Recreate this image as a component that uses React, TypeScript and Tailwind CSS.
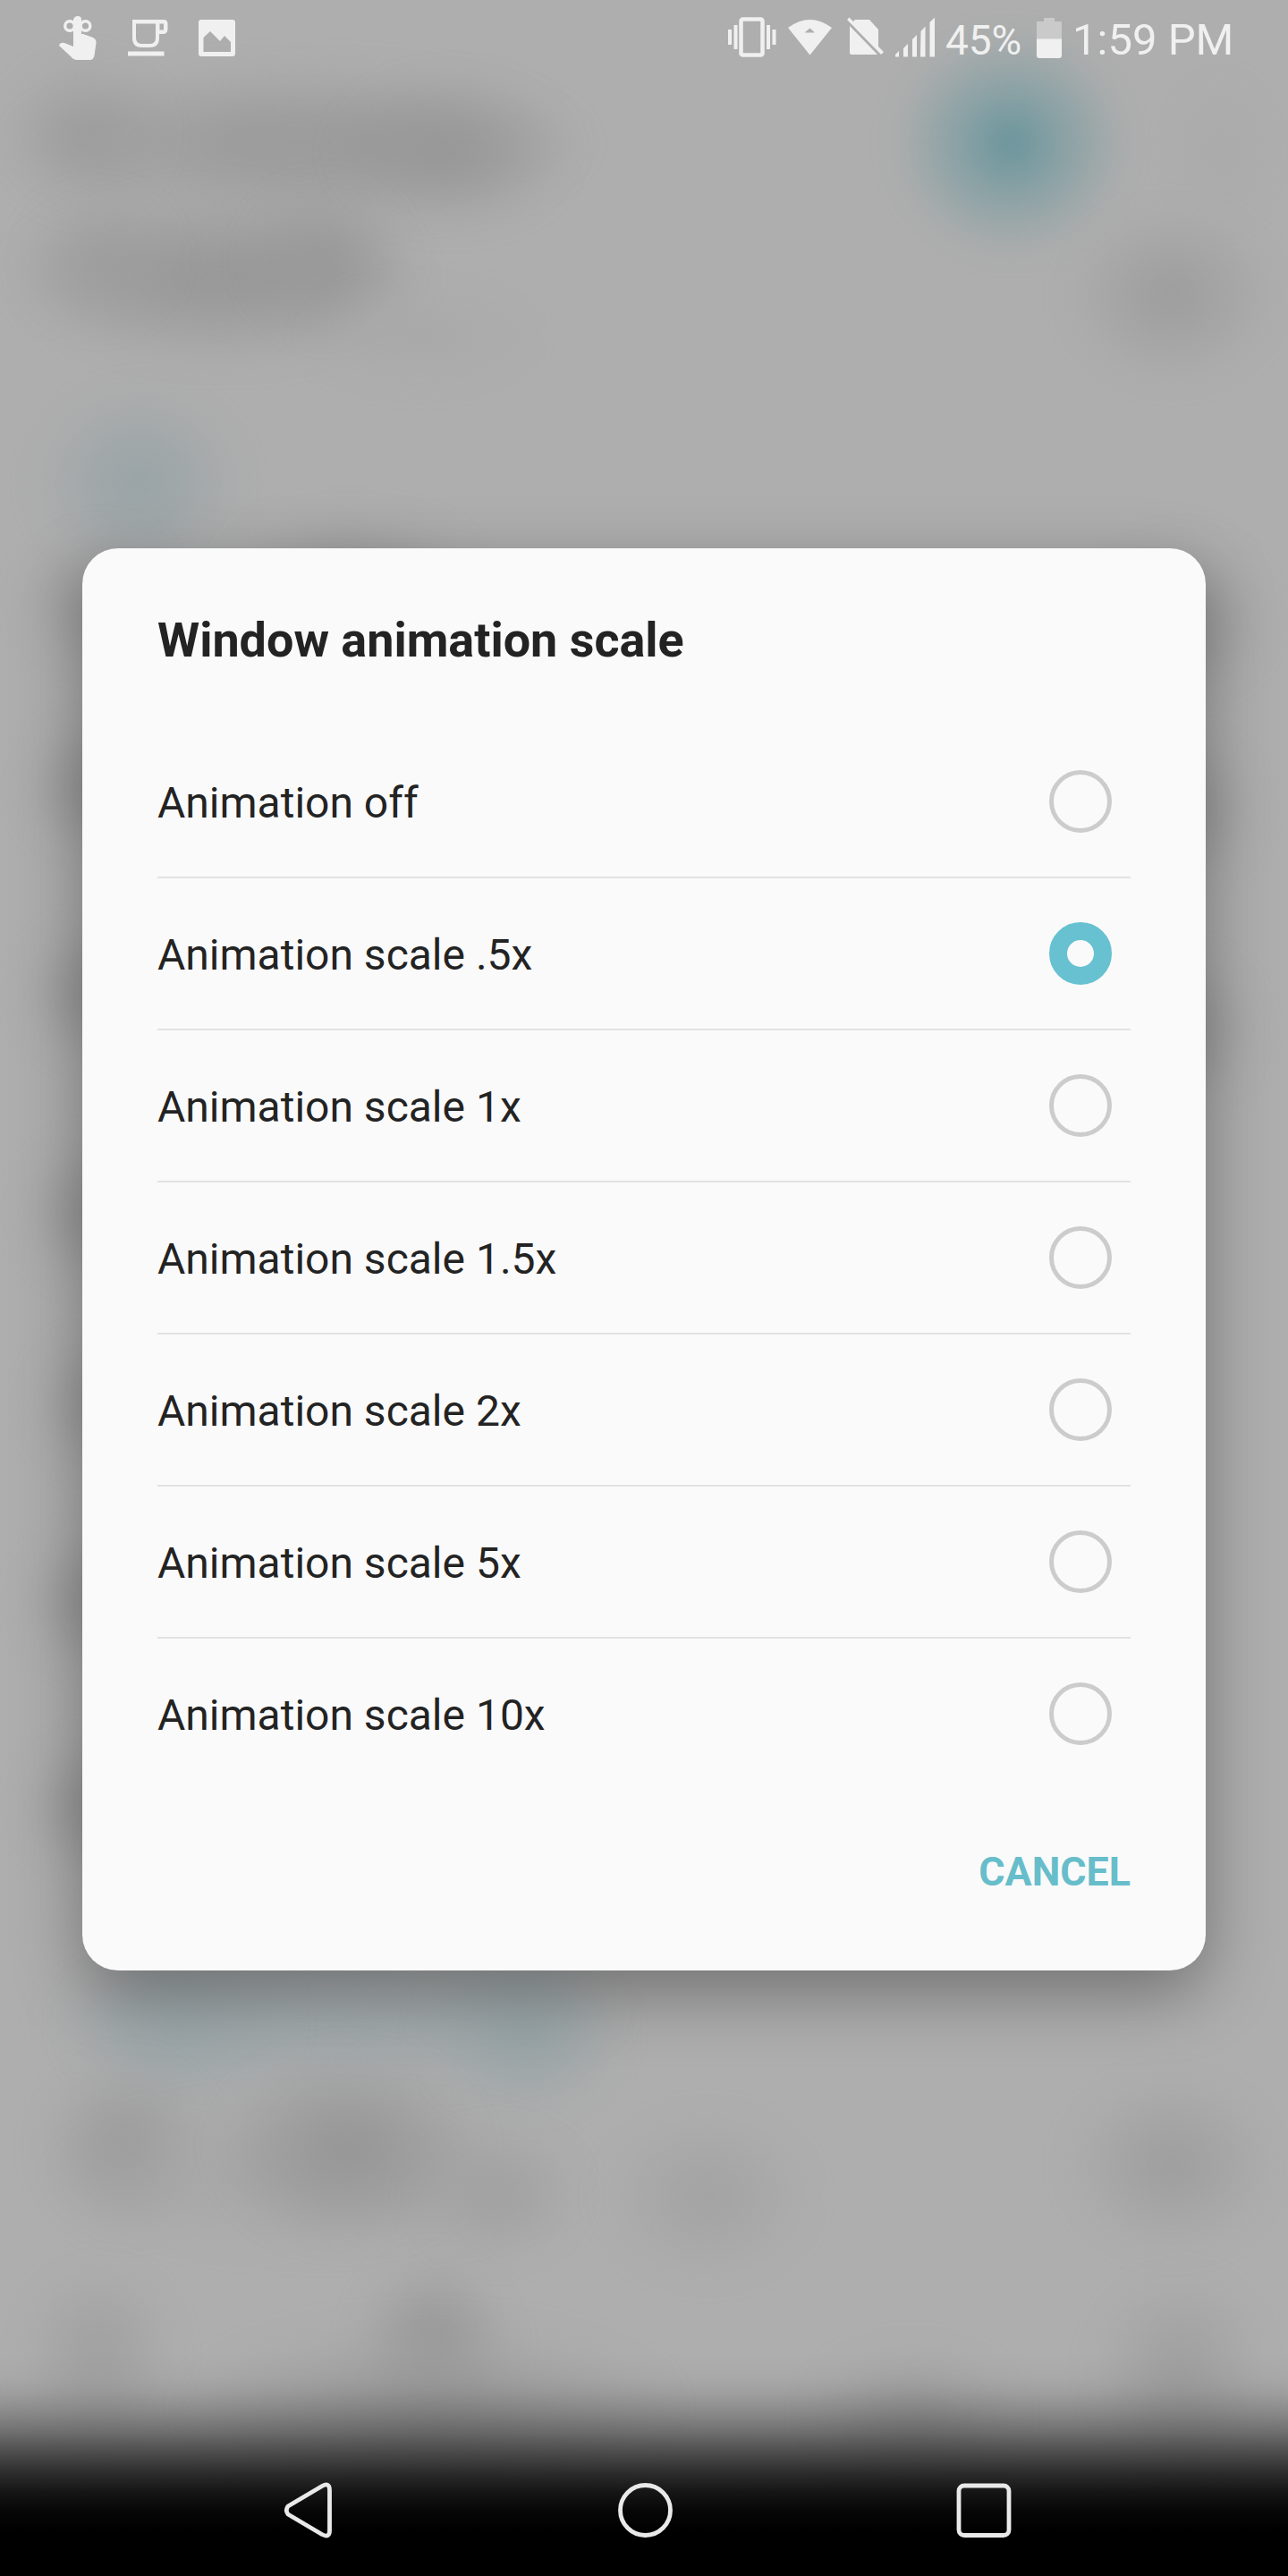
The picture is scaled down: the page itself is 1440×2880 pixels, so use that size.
import React from "react";

const options = [
  "Animation off",
  "Animation scale .5x",
  "Animation scale 1x",
  "Animation scale 1.5x",
  "Animation scale 2x",
  "Animation scale 5x",
  "Animation scale 10x",
];

const smudges = [
  "left-[10px] top-[70px] w-[650px] h-[180px] bg-[radial-gradient(closest-side,#9c9c9c_25%,transparent)]",
  "left-[0px] top-[60px] w-[190px] h-[180px] bg-[radial-gradient(closest-side,#959595a0,transparent)]",
  "left-[370px] top-[80px] w-[270px] h-[180px] bg-[radial-gradient(closest-side,#8f8f8fa0,transparent)]",
  "left-[10px] top-[210px] w-[470px] h-[200px] bg-[radial-gradient(closest-side,#999999_20%,transparent)]",
  "left-[20px] top-[210px] w-[180px] h-[160px] bg-[radial-gradient(closest-side,#98989890,transparent)]",
  "left-[270px] top-[200px] w-[190px] h-[180px] bg-[radial-gradient(closest-side,#929292a0,transparent)]",
  "left-[340px] top-[320px] w-[260px] h-[110px] bg-[radial-gradient(closest-side,#a8a8a8,transparent)]",
  "left-[1000px] top-[35px] w-[260px] h-[250px] bg-[radial-gradient(closest-side,#65939b,#86a0a4_40%,transparent)]",
  "left-[1310px] top-[90px] w-[110px] h-[160px] bg-[radial-gradient(closest-side,#a9a9a9,transparent)]",
  "left-[1190px] top-[230px] w-[240px] h-[200px] bg-[radial-gradient(closest-side,#9c9c9c,transparent)]",
  "left-[35px] top-[430px] w-[240px] h-[220px] bg-[radial-gradient(closest-side,#97a3a6,transparent)]",
  "left-[250px] top-[570px] w-[280px] h-[120px] bg-[radial-gradient(closest-side,#9e9e9e,transparent)]",
  "left-[20px] top-[590px] w-[180px] h-[160px] bg-[radial-gradient(closest-side,#9b9b9b,transparent)]",
  "left-[20px] top-[800px] w-[180px] h-[160px] bg-[radial-gradient(closest-side,#969696,transparent)]",
  "left-[20px] top-[1030px] w-[180px] h-[160px] bg-[radial-gradient(closest-side,#969696,transparent)]",
  "left-[20px] top-[1270px] w-[180px] h-[170px] bg-[radial-gradient(closest-side,#969696,transparent)]",
  "left-[30px] top-[1490px] w-[170px] h-[160px] bg-[radial-gradient(closest-side,#9a9a9a,transparent)]",
  "left-[20px] top-[1710px] w-[180px] h-[160px] bg-[radial-gradient(closest-side,#969696,transparent)]",
  "left-[20px] top-[1940px] w-[180px] h-[160px] bg-[radial-gradient(closest-side,#969696,transparent)]",
  "left-[1220px] top-[600px] w-[200px] h-[180px] bg-[radial-gradient(closest-side,#9b9b9b,transparent)]",
  "left-[1220px] top-[820px] w-[190px] h-[170px] bg-[radial-gradient(closest-side,#999999,transparent)]",
  "left-[1220px] top-[1060px] w-[190px] h-[180px] bg-[radial-gradient(closest-side,#999999,transparent)]",
  "left-[40px] top-[2170px] w-[660px] h-[170px] bg-[radial-gradient(closest-side,#a2a9ab_30%,transparent)]",
  "left-[70px] top-[2170px] w-[260px] h-[190px] bg-[radial-gradient(closest-side,#99a5a8,transparent)]",
  "left-[470px] top-[2170px] w-[230px] h-[200px] bg-[radial-gradient(closest-side,#95a3a6,transparent)]",
  "left-[40px] top-[2300px] w-[200px] h-[200px] bg-[radial-gradient(closest-side,#9a9a9a,transparent)]",
  "left-[60px] top-[2340px] w-[600px] h-[180px] bg-[radial-gradient(closest-side,#a5a5a5,transparent)]",
  "left-[240px] top-[2290px] w-[300px] h-[220px] bg-[radial-gradient(closest-side,#959595,transparent)]",
  "left-[460px] top-[2380px] w-[190px] h-[150px] bg-[radial-gradient(closest-side,#a0a0a0,transparent)]",
  "left-[670px] top-[2360px] w-[240px] h-[190px] bg-[radial-gradient(closest-side,#a2a2a2,transparent)]",
  "left-[1190px] top-[2320px] w-[240px] h-[200px] bg-[radial-gradient(closest-side,#9d9d9d,transparent)]",
  "left-[395px] top-[2520px] w-[180px] h-[200px] bg-[radial-gradient(closest-side,#969696,transparent)]",
  "left-[20px] top-[2530px] w-[180px] h-[200px] bg-[radial-gradient(closest-side,#9f9f9f,transparent)]",
  "left-[200px] top-[2590px] w-[560px] h-[200px] bg-[radial-gradient(closest-side,#9d9d9d,transparent)]",
  "left-[900px] top-[2620px] w-[240px] h-[160px] bg-[radial-gradient(closest-side,#a0a0a0,transparent)]",
  "left-[1220px] top-[2540px] w-[200px] h-[220px] bg-[radial-gradient(closest-side,#9e9e9e,transparent)]",
];

function Backdrop() {
  return (
    <div className="absolute inset-0 overflow-hidden bg-[#aeaeae]">
      {smudges.map((s) => (
        <div key={s} className={"absolute blur-[16px] " + s} />
      ))}
      <div className="absolute inset-x-0 bottom-0 h-[280px] bg-[linear-gradient(to_bottom,transparent_30px,#00000008_58px,#00000016_75px,#0000003a_100px,#0000005e_120px,#0000007c_133px,#0000009f_150px,#000000c2_167px,#000000e1_187px,#000000f5_207px,#000_230px)]" />
    </div>
  );
}

function StatusBar() {
  return (
    <header className="relative flex h-[84px] items-start justify-between text-[#f0f0f0]">
      <svg width="300" height="84" fill="currentColor" aria-hidden="true">
        <g fill="none" stroke="currentColor" strokeWidth="3.4">
          <circle cx="78" cy="29" r="5.3" />
          <circle cx="95.500" cy="29" r="5.3" />
        </g>
        <path d="M82 22q1-4 5-4t4 4V38h2l11 4q4 2 3.500 6l-2 14q-1 5-5 5H86q-4 0-7-4L66 51q1-4 6-3l10 4Z" />
        <path fillRule="evenodd" d="M148 22H183q4.500 0 4.500 5V32q0 6-5.500 6h-4v4q0 11-10 11H158q-10 0-10-11Zm4 4.500V42q0 7 6 7h10q6 0 6-7V26.500Zm26.500 0v7h4.500v-7ZM143 57.500h40.500V62.500H143Z" />
        <path fillRule="evenodd" d="M225 22h35q3 0 3 3V60q0 3-3 3H225q-3 0-3-3V25q0-3 3-3Zm2.500 20V58h30.500V47l-7-7-5 6-11-11Z" />
      </svg>
      <div className="flex h-[84px] items-start">
        <svg width="264" height="84" viewBox="790 0 264 84" fill="currentColor" aria-hidden="true">
          <path d="M814 33h4v17h-4zM820.500 28h4v27h-4zM857 28h4v27h-4zM863.500 33h4v17h-4z" />
          <rect x="828.500" y="21.500" width="24" height="40" rx="2" fill="none" stroke="currentColor" strokeWidth="4.500" />
          <path fillRule="evenodd" d="M881 31Q905.500 13 930 31L905.500 61.500ZM899.500 36.500H911L905.500 31.500Z" />
          <path d="M947 22 949.500 19.500 954 24 956 22H972L982 33V52L988 58 985 61ZM950 29 981 61H952Q950 61 950 59Z" />
          <path d="M1001 63.500V61L1005 57V63.500ZM1010 54l5-5V63.500h-5ZM1020 44l5-5V63.500h-5ZM1029.500 35l5-5.500V63.500h-5.500ZM1039.500 25l5.500-5.500V63.500h-5.500Z" />
        </svg>
        <span className="w-[105px] pt-[18px] pl-[3px] text-[46px] leading-[54px] tracking-[-0.1px]">45%</span>
        <svg width="28" height="84" viewBox="0 0 28 84" aria-hidden="true">
          <path d="M0 24H8V20H20V24H28V44H0Z" fill="#cacaca" />
          <path d="M0 43.500H28V62q0 3-3 3H3q-3 0-3-3Z" fill="#f0f0f0" />
        </svg>
        <span className="w-[253px] pt-[17px] pl-[12px] text-[49px] leading-[56px]">1:59 PM</span>
      </div>
    </header>
  );
}

function Radio({ checked }: { checked: boolean }) {
  return checked ? (
    <span className="size-[70px] rounded-full border-[20px] border-[#67c1d0]" />
  ) : (
    <span className="size-[70px] rounded-full border-[5px] border-[#cccccc]" />
  );
}

function ScaleDialog() {
  return (
    <section
      role="dialog"
      className="relative mx-[92px] mt-[529px] flex h-[1590px] flex-col rounded-[40px] bg-[#fafafa] px-[84px] text-[#232323] shadow-[0_26px_76px_rgba(0,0,0,0.34)]"
    >
      <h1 className="h-[199px] pt-[71px] text-[53.9px] leading-[64px] font-bold">Window animation scale</h1>
      <ul>
        {options.map((label, i) => (
          <li
            key={label}
            className="flex h-[170px] items-center justify-between border-b-2 border-[#e2e2e2] pr-[21px] last:border-transparent"
          >
            <span className="pt-[4px] text-[48px] leading-[56px]">{label}</span>
            <Radio checked={i === 1} />
          </li>
        ))}
      </ul>
      <button className="mt-[63px] self-end text-[44.8px] leading-[56px] font-bold text-[#67bdca]">CANCEL</button>
    </section>
  );
}

function NavigationBar() {
  return (
    <nav className="relative mt-auto flex h-[147px] items-center text-[#e9e9e9]">
      <svg width="1440" height="147" viewBox="0 2733 1440 147" fill="none" stroke="currentColor" strokeWidth="4.800" strokeLinejoin="round" aria-hidden="true">
        <path d="M322 2802 360 2779.500Q368.500 2775 368.500 2784V2829Q368.500 2838 360 2833.500L322 2811Q318.500 2806.500 322 2802Z" />
        <circle cx="721.500" cy="2806.500" r="28" />
        <rect x="1072" y="2779" width="56" height="55.500" rx="6" />
      </svg>
    </nav>
  );
}

export default function App() {
  return (
    <main className="relative flex h-[2880px] w-[1440px] flex-col overflow-hidden font-[Roboto,sans-serif]">
      <Backdrop />
      <StatusBar />
      <ScaleDialog />
      <NavigationBar />
    </main>
  );
}
